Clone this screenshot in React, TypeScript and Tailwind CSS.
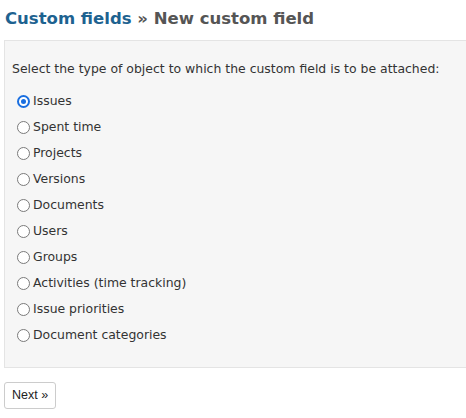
const types = [
  "Issues",
  "Spent time",
  "Projects",
  "Versions",
  "Documents",
  "Users",
  "Groups",
  "Activities (time tracking)",
  "Issue priorities",
  "Document categories",
];

function Radio({ checked }: { checked: boolean }) {
  return (
    <span
      className={
        "box-border inline-flex h-[13px] w-[13px] shrink-0 items-center justify-center rounded-full bg-white " +
        (checked ? "border-2 border-[#1a6fe0]" : "border border-[#7a7a7a]")
      }
    >
      {checked && <span className="h-[5px] w-[5px] rounded-full bg-[#1a6fe0]" />}
    </span>
  );
}

export default function App() {
  return (
    <div className="min-h-[418px] bg-white font-['DejaVu_Sans',Verdana,sans-serif] text-[12.45px] text-[#333]">
      <h2 className="pl-[5px] pt-[7px] text-[16.5px] font-bold leading-[24px] text-[#555]">
        <span className="text-[#1d6290]">Custom fields</span> » New custom field
      </h2>
      <div className="ml-[4px] mr-[-4px] mt-[9px] border border-[#e4e4e4] bg-[#f6f6f6] pb-[19px] pl-[7px] pt-[20px]">
        <p className="mb-[11px] leading-[16px]">
          Select the type of object to which the custom field is to be attached:
        </p>
        <div className="flex flex-col">
          {types.map((t, i) => (
            <label key={t} className="flex h-[26px] items-center gap-[3px] pl-[5px]">
              <Radio checked={i === 0} />
              <span>{t}</span>
            </label>
          ))}
        </div>
      </div>
      <button className="ml-[4px] mt-[14px] h-[27px] rounded-[3px] border border-[#ccc] bg-white px-[7px] font-['Liberation_Sans',Arial,sans-serif] text-[12.5px] text-[#222]">
        Next »
      </button>
    </div>
  );
}
